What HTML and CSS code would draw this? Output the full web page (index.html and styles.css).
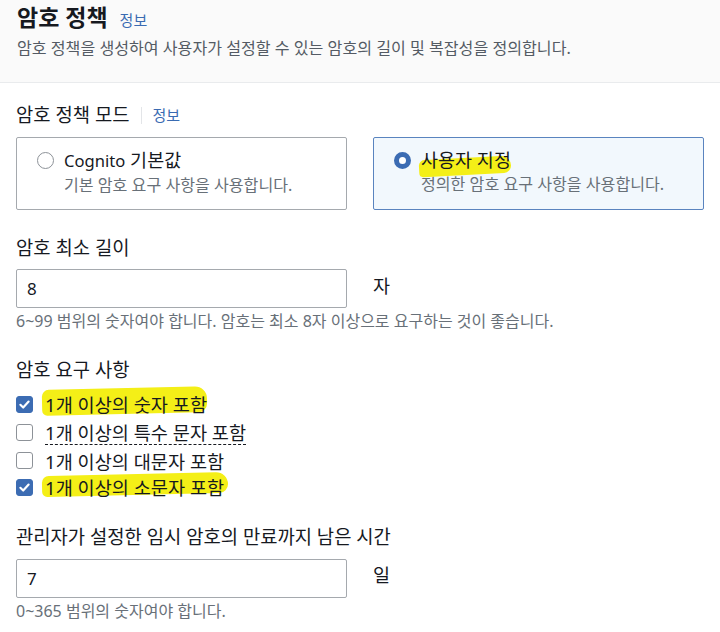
FILE: index.html
```html
<!DOCTYPE html>
<html lang="ko">
<head>
<meta charset="utf-8">
<link rel="stylesheet" href="styles.css">
</head>
<body>
<header class="header">
  <h1 class="title">암호 정책 <a class="info title-info">정보</a></h1>
  <p class="desc">암호 정책을 생성하여 사용자가 설정할 수 있는 암호의 길이 및 복잡성을 정의합니다.</p>
</header>
<main class="content">
  <section class="field mode">
    <div class="label">암호 정책 모드<span class="divider"></span><a class="info">정보</a></div>
    <div class="tiles">
      <div class="tile">
        <span class="radio"></span>
        <div class="tile-text">
          <div class="tile-title"><span class="latin">Cognito</span> 기본값</div>
          <div class="tile-desc">기본 암호 요구 사항을 사용합니다.</div>
        </div>
      </div>
      <div class="tile selected">
        <span class="radio checked"></span>
        <div class="tile-text">
          <div class="tile-title"><span class="mark mark-a">사용자 지정</span></div>
          <div class="tile-desc">정의한 암호 요구 사항을 사용합니다.</div>
        </div>
      </div>
    </div>
  </section>

  <section class="field length">
    <div class="label">암호 최소 길이</div>
    <div class="input-row">
      <div class="input">8</div>
      <span class="unit">자</span>
    </div>
    <div class="hint">6~99 범위의 숫자여야 합니다. 암호는 최소 8자 이상으로 요구하는 것이 좋습니다.</div>
  </section>

  <section class="field reqs">
    <div class="label">암호 요구 사항</div>
    <ul class="checks">
      <li class="check"><span class="box on"><svg viewBox="0 0 16 16"><path d="M3.6 8.3 6.6 11.2 12.4 4.9" /></svg></span><span class="mark mark-b">1개 이상의 숫자 포함</span></li>
      <li class="check"><span class="box"></span><span class="dotted">1개 이상의 특수 문자 포함</span></li>
      <li class="check"><span class="box"></span><span>1개 이상의 대문자 포함</span></li>
      <li class="check"><span class="box on"><svg viewBox="0 0 16 16"><path d="M3.6 8.3 6.6 11.2 12.4 4.9" /></svg></span><span class="mark mark-c">1개 이상의 소문자 포함</span></li>
    </ul>
  </section>

  <section class="field temp">
    <div class="label">관리자가 설정한 임시 암호의 만료까지 남은 시간</div>
    <div class="input-row">
      <div class="input">7</div>
      <span class="unit">일</span>
    </div>
    <div class="hint">0~365 범위의 숫자여야 합니다.</div>
  </section>
</main>
</body>
</html>
```

FILE: styles.css
```css
* { box-sizing: border-box; }
html, body { margin: 0; padding: 0; }
body {
  width: 720px;
  height: 632px;
  overflow: hidden;
  background: #ffffff;
  color: #16191f;
  font-family: "Noto Sans", "Noto Sans CJK KR", sans-serif;
}
.header {
  background: #fafafa;
  border-bottom: 1px solid #e9ebed;
  height: 83px;
  padding: 0 17px;
}
.title {
  margin: 0;
  font-size: 23px;
  line-height: 34px;
  font-weight: 700;
  color: #16191f;
}
.info {
  color: #3a6bb2;
  font-weight: 400;
  font-size: 15px;
}
.title-info { margin-left: 6px; }
.desc {
  margin: 0;
  font-size: 16.1px;
  line-height: 22px;
  color: #545b64;
}
.content { padding: 0 17px 0 16px; }
.label {
  font-size: 18.8px;
  line-height: 28px;
  height: 28px;
  color: #16191f;
  display: flex;
  align-items: center;
}
.divider {
  width: 1px;
  height: 17px;
  background: #e3e5e8;
  margin: 0 10px 0 12px;
}
.mode { margin-top: 18px; }
.tiles {
  display: grid;
  grid-template-columns: 331px 331px;
  gap: 26px;
  margin-top: 8px;
}
.tile {
  height: 73px;
  border: 1px solid #a5a9ae;
  border-radius: 2px;
  display: flex;
  align-items: flex-start;
  padding: 10px 20px 0 20px;
  background: #fff;
}
.tile.selected {
  border-color: #5a84bf;
  background: #f2f8fd;
}
.radio {
  width: 17px;
  height: 17px;
  border-radius: 50%;
  border: 1.5px solid #8d9298;
  margin-top: 3.5px;
  margin-right: 10px;
  flex: none;
  background: #fff;
}
.radio.checked {
  border: 5px solid #3c6cb3;
}
.tile-title {
  font-size: 18.5px;
  line-height: 24px;
  color: #16191f;
}
.latin { font-size: 16.6px; }
.tile-desc {
  font-size: 16.1px;
  line-height: 24px;
  color: #687078;
}
.mark {
  position: relative;
  z-index: 0;
  display: inline-block;
}
.mark::before {
  content: "";
  position: absolute;
  z-index: -1;
  background: #f4ef17;
  border-radius: 7px 12px 9px 5px;
}
.mark-a { line-height: 24px; }
.mark-a::before { left: -2px; right: 0; top: 10px; bottom: -3px; transform: rotate(-3deg); }
.mark-b { line-height: 27px; }
.mark-b::before { left: -3px; right: 0; top: -3px; bottom: 4px; transform: rotate(-1.3deg); }
.mark-c { line-height: 27px; }
.mark-c::before { left: -3px; right: -4px; top: 0px; bottom: 6px; transform: rotate(-1.3deg); }
.input-row {
  display: grid;
  grid-template-columns: 331px auto;
  gap: 26px;
  align-items: center;
}
.input {
  height: 39px;
  border: 1px solid #a5a9ae;
  border-radius: 2px;
  padding: 0 10px;
  font-size: 17px;
  line-height: 37px;
  color: #16191f;
}
.unit {
  font-size: 18.5px;
  line-height: 24px;
  color: #16191f;
  position: relative;
  top: -3px;
}
.hint {
  margin-top: 2px;
  font-size: 16px;
  line-height: 22px;
  color: #687078;
}
.length { margin-top: 24px; }
.length .input-row { margin-top: 7px; }
.reqs { margin-top: 24px; }
.checks {
  list-style: none;
  margin: 7px 0 0 0;
  padding: 0;
}
.check {
  display: flex;
  align-items: center;
  height: 27.7px;
  font-size: 18.6px;
  color: #16191f;
}
.box {
  width: 17px;
  height: 17px;
  border: 1.5px solid #8d9298;
  border-radius: 3px;
  margin-right: 12px;
  flex: none;
  display: flex;
  align-items: center;
  justify-content: center;
  background: #fff;
}
.box.on {
  background: #3c6cb3;
  border-color: #3c6cb3;
}
.box svg { width: 15px; height: 15px; }
.box path { fill: none; stroke: #fff; stroke-width: 2.3; stroke-linecap: round; stroke-linejoin: round; }
.dotted { border-bottom: 1px dashed #16191f; line-height: 23px; }
.temp { margin-top: 21px; }
.temp .input-row { margin-top: 8px; }
```
